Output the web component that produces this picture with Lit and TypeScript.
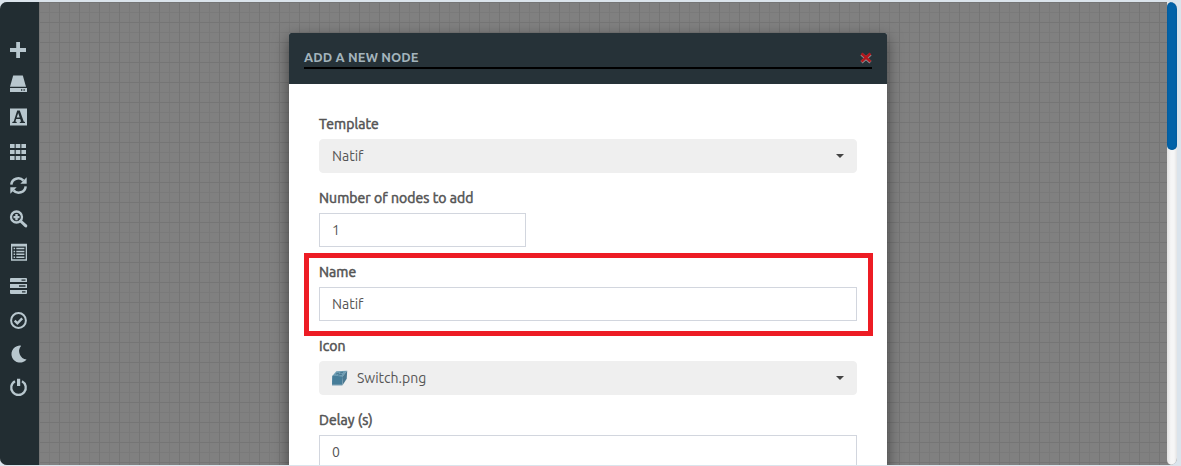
import { LitElement, html, svg, css } from "lit";
import { customElement } from "lit/decorators.js";

const tools = [
  svg`<path d="M7.200 1h3.800v6h6v4h-6v6H7.200v-6H1V7h6.200z"/>`,
  svg`<path d="M4.200.500h9.600l3.200 11.200H1z"/><path fill-rule="evenodd" d="M1 13h17v4H1zM12 14.200v1.500h1.300v-1.500zM14.500 14.200v1.500h1.300v-1.500z"/>`,
  svg`<path fill-rule="evenodd" d="M1 .500h17v17H1zM8.200 2.500L4.700 13.400 3.300 14v1h4.400v-1l-1.300-.5.8-2.400h4l.9 2.400-1.300.5v1H16v-1l-1.300-.6L10.800 2.500zM7.700 9.600l1.500-4.700 1.500 4.700z"/>`,
  svg`<path d="M1 2h4.600v4H1zM6.700 2h4.600v4H6.700zM12.400 2H17v4h-4.600zM1 8h4.600v4H1zM6.700 8h4.600v4H6.700zM12.400 8H17v4h-4.600zM1 14h4.600v4H1zM6.700 14h4.600v4H6.700zM12.400 14H17v4h-4.600z"/>`,
  svg`<path d="M2.300 8.700A7 7 0 0 1 14.500 4.700M16.700 10.300A7 7 0 0 1 4.500 14.300" fill="none" stroke="currentColor" stroke-width="2.500"/><path d="M17.700 1.300v6.400h-6.400zM1.300 17.700v-6.400h6.400z"/>`,
  svg`<circle cx="7.500" cy="8" r="5.500" fill="none" stroke="currentColor" stroke-width="2.300"/><path d="M11.500 12l5.300 4.900" stroke="currentColor" stroke-width="3" stroke-linecap="round"/><path d="M6.300 5h2.400v1.900h1.800v2.400H8.700v1.900H6.300V9.300H4.500V6.900h1.800z"/>`,
  svg`<path fill-rule="evenodd" d="M2 .700h16v17H2zM3.300 3.500v12.800h13.400V3.500z"/><path d="M4.600 4.800h1.500v1.500H4.600zM7.300 4.800h8.100v1.500H7.300zM4.600 7.700h1.500v1.500H4.600zM7.300 7.700h8.100v1.500H7.300zM4.600 10.600h1.500v1.500H4.600zM7.300 10.600h8.100v1.500H7.300zM4.600 13.500h1.500v1.500H4.600zM7.300 13.500h8.100v1.500H7.300z"/>`,
  svg`<path fill-rule="evenodd" d="M2 1h15q1 0 1 1v3H1V2q0-1 1-1zM12.500 2.500v1.300h4V2.500zM1 7h17v4H1zM10 8.200v1.500h6.500V8.200zM1 13h17v3q0 1-1 1H2q-1 0-1-1zM13 14.300v1.300h3.500v-1.300z"/>`,
  svg`<circle cx="9.500" cy="9.500" r="7.400" fill="none" stroke="currentColor" stroke-width="2"/><path d="M5.700 9.600l2.700 2.700 4.800-5" fill="none" stroke="currentColor" stroke-width="2.400"/>`,
  svg`<path d="M12.200 1.700A8.500 8.500 0 1 0 17.600 15.400 8.300 8.300 0 0 1 12.200 1.700z"/>`,
  svg`<path d="M6 3.200A7.300 7.300 0 1 0 13 3.200" fill="none" stroke="currentColor" stroke-width="2.300"/><path d="M8 .800h3.200v7.200H8z"/>`,
];

@customElement("app-root")
export class AppRoot extends LitElement {
  static styles = css`
    * { box-sizing: border-box; }
    :host {
      display: block; height: 466px; overflow: hidden; padding: 2px 4px 1px 0;
      background: #dbe4ec; color: #555;
      font: 14px/20px Ubuntu, "Noto Sans", sans-serif;
    }
    .window {
      position: relative; display: flex; height: 463px; overflow: hidden;
      border-radius: 7px; background: #808080;
    }
    .sidebar {
      flex: none; width: 39px; background: #222d32; color: #b8c7ce;
      display: flex; flex-direction: column; align-items: center;
      padding: 39px 3px 0 0; gap: 15.700px;
    }
    .tool { display: block; width: 18px; height: 18px; flex: none; overflow: visible; fill: currentColor; }
    .canvas {
      flex: 1; display: flex; overflow: hidden; padding: 31px 0 0 250px;
      background-color: #808080;
      background-image:
        linear-gradient(#757575 1px, transparent 1px),
        linear-gradient(90deg, #757575 1px, transparent 1px),
        linear-gradient(#7a7a7a 1px, transparent 1px),
        linear-gradient(90deg, #7a7a7a 1px, transparent 1px);
      background-size: 20px 20px, 20px 20px, 10px 10px, 10px 10px;
    }
    .modal {
      flex: none; position: relative; width: 598px; height: 500px; background: #fff;
      border-radius: 2px 2px 0 0; box-shadow: 0 5px 15px rgba(0, 0, 0, .5);
    }
    .header { height: 51px; padding: 15px 15px 0; background: #263238; border-radius: 2px 2px 0 0; }
    .bar {
      display: flex; justify-content: space-between; align-items: center;
      height: 21px; border-bottom: 2px solid #000;
    }
    .title { color: #a3b4bc; font-size: 13px; font-weight: 700; letter-spacing: .1px; line-height: 19px; }
    .close { width: 12px; height: 12px; display: block; margin-top: 1px; }
    .form { display: flex; flex-direction: column; gap: 15px; padding: 30px; }
    .field { display: flex; flex-direction: column; gap: 5px; }
    .label { height: 20px; white-space: nowrap; letter-spacing: .07px; -webkit-text-stroke: .55px #555; }
    .control {
      display: flex; align-items: center; height: 34px; padding: 0 12px;
      border: 1px solid #d2d6de; background: #fff; white-space: nowrap;
    }
    .narrow { width: 207px; }
    .select { border-color: #efefef; background: #efefef; border-radius: 4px; }
    .picture { width: 16px; height: 16px; margin-right: 9px; }
    .caret { margin-left: auto; border: 4px solid transparent; border-top-color: #444; border-bottom: 0; }
    .highlight {
      position: absolute; left: 15px; top: 220px; width: 569px; height: 83px;
      border: 5px solid #ed1c24;
    }
    .track {
      flex: none; width: 10px; border-radius: 0 0 5px 5px;
      background: linear-gradient(90deg, #e2e2e2, #f6f6f6 40%, #f6f6f6 70%, #e4e4e4);
    }
    .thumb { height: 148px; border-radius: 5px; background: #0262a8; box-shadow: inset 0 0 2px #024f8a; }
  `;

  render() {
    return html`
      <div class="window">
        <nav class="sidebar">
          ${tools.map((t) => html`<svg class="tool" viewBox="0 0 18 18">${t}</svg>`)}
        </nav>
        <main class="canvas">
          <section class="modal">
            <header class="header">
              <div class="bar">
                <span class="title">ADD A NEW NODE</span>
                <svg class="close" viewBox="0 0 12 12">
                  <path d="M1.500 2.300l9 8M10.500 2.300l-9 8" stroke="#8d9296" stroke-width="3.200"/>
                  <path d="M1.500 1.500l9 8.200M10.500 1.500l-9 8.200" stroke="#b3161c" stroke-width="2.500"/>
                </svg>
              </div>
            </header>
            <div class="form">
              <div class="field">
                <span class="label">Template</span>
                <div class="control select"><span>Natif</span><i class="caret"></i></div>
              </div>
              <div class="field">
                <span class="label">Number of nodes to add</span>
                <div class="control narrow"><span>1</span></div>
              </div>
              <div class="field">
                <span class="label">Name</span>
                <div class="control"><span>Natif</span></div>
              </div>
              <div class="field">
                <span class="label">Icon</span>
                <div class="control select">
                  <svg class="picture" viewBox="0 0 16 16">
                    <path d="M.3 6L4.300 1.200 15.200.800 11 6z" fill="#6e9db3"/>
                    <path d="M.2 5.800L11 6.200 10.300 15.200H0z" fill="#467d99"/>
                    <path d="M11 6l4.200-5.200-.5 8-4.200 6.400z" fill="#4a7890"/>
                    <path d="M4 4l3-.8M8 3l3-.8M6 5l4-.7" stroke="#3c6b85" stroke-width=".8"/>
                    <path d="M0 14.800h10.300" stroke="#7da2b4" stroke-width=".8"/>
                  </svg>
                  <span>Switch.png</span><i class="caret"></i>
                </div>
              </div>
              <div class="field">
                <span class="label">Delay (s)</span>
                <div class="control"><span>0</span></div>
              </div>
            </div>
            <div class="highlight"></div>
          </section>
        </main>
        <div class="track"><div class="thumb"></div></div>
      </div>
    `;
  }
}
